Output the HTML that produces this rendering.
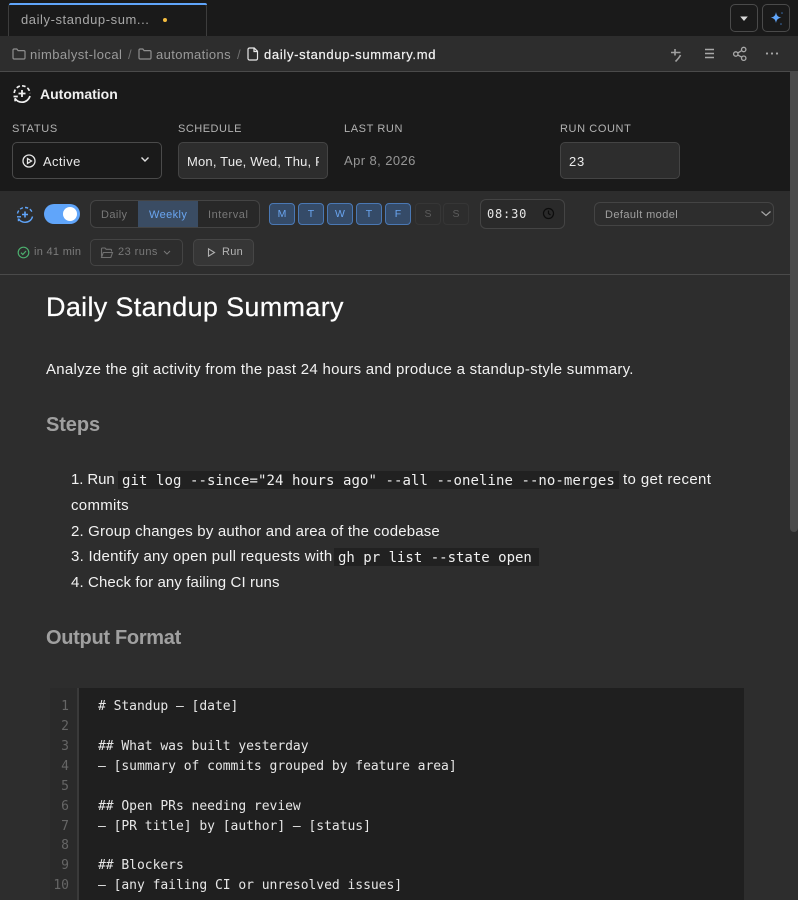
<!DOCTYPE html>
<html><head><meta charset="utf-8">
<style>
html,body{margin:0;padding:0;background:#2d2d2d;}
#p{position:relative;width:798px;height:900px;overflow:hidden;background:#2d2d2d;font-family:"Liberation Sans",sans-serif;color:#fff;}
#p div,#p span.a,#p svg{position:absolute;}
.t{white-space:nowrap;}
.lbl{font-size:11px;color:#b3b3b3;letter-spacing:.7px;top:123px;line-height:13px;}
.box{box-sizing:border-box;border-radius:5px;}
.day{box-sizing:border-box;width:26px;height:22px;top:203px;border-radius:4px;border:1px solid #4a78b4;background:#354b68;color:#6aa5f0;font-size:10.5px;text-align:center;line-height:20px;}
.off{border:1px solid #363636;background:#2d2d2d;color:#5c5c5c;}
.mono{font-family:"DejaVu Sans Mono","Liberation Mono",monospace;}
.code{background:#212121;height:18px;font-size:14px;line-height:20px;color:#f0f0f0;padding:0 4px;box-sizing:border-box;letter-spacing:.07px;}
.b{font-size:15px;line-height:24px;color:#f2f2f2;}
.ln{left:49px;width:20px;text-align:right;font-size:13px;line-height:20px;color:#666;}
.cl{left:98px;font-size:13px;line-height:20px;color:#e6e6e6;letter-spacing:-.03px;}
.tb{font-size:11px;line-height:14px;top:208px;letter-spacing:.4px;}
</style></head><body>
<div id="p">
<!-- tab bar -->
<div style="left:0;top:0;width:798px;height:36px;background:#1a1a1a"></div>
<div style="left:8px;top:3px;width:199px;height:33px;box-sizing:border-box;border:1px solid #3d3d3d;border-bottom:none;border-radius:4px 4px 0 0;background:#1a1a1a"></div>
<div style="left:9px;top:3px;width:198px;height:2px;background:#60a5fa;border-radius:2px 2px 0 0"></div>
<div class="t" style="left:21px;top:12px;font-size:13px;line-height:15px;color:#a8a8a8;letter-spacing:.57px">daily-standup-sum...</div>
<div style="left:163px;top:18px;width:4px;height:4px;border-radius:50%;background:#f5bd3f"></div>
<div class="box" style="left:730px;top:4px;width:28px;height:28px;border:1px solid #4a4a4a;border-radius:5px"></div>
<svg style="left:730px;top:4px" width="28" height="28"><path d="M10.200 12.500h7.600L14 17z" fill="#d8d8d8"/></svg>
<div class="box" style="left:762px;top:4px;width:28px;height:28px;border:1px solid #4a4a4a;border-radius:5px"></div>
<svg style="left:762px;top:4px" width="28" height="28"><path d="M14 8c.6 3.600 1.800 5 5.400 5.600-3.600.6-4.800 2-5.400 5.400-.6-3.400-1.800-4.800-5.400-5.400 3.600-.6 4.800-2 5.400-5.600z" fill="#60a5fa"/><circle cx="20" cy="9" r=".8" fill="#3b6fb0"/><circle cx="19" cy="20" r=".8" fill="#3b6fb0"/></svg>
<!-- breadcrumb -->
<div style="left:0;top:36px;width:798px;height:36px;background:#2d2d2d;border-bottom:1px solid #4a4a4a;box-sizing:border-box"></div>
<svg style="left:12px;top:47px" width="14" height="14" fill="none" stroke="#8f8f8f" stroke-width="1.200"><path d="M1 3.200c0-.7.5-1.200 1.200-1.200h2.600l1.300 1.600h5.700c.7 0 1.200.5 1.200 1.200v6c0 .7-.5 1.200-1.200 1.200H2.200c-.7 0-1.200-.5-1.200-1.200z"/></svg>
<div class="t" style="left:30px;top:47px;font-size:13px;line-height:15px;color:#9a9a9a;letter-spacing:.42px">nimbalyst-local</div>
<div class="t" style="left:128px;top:47px;font-size:13px;line-height:15px;color:#707070">/</div>
<svg style="left:138px;top:47px" width="14" height="14" fill="none" stroke="#8f8f8f" stroke-width="1.200"><path d="M1 3.200c0-.7.5-1.200 1.200-1.200h2.600l1.300 1.600h5.700c.7 0 1.200.5 1.200 1.200v6c0 .7-.5 1.200-1.200 1.200H2.200c-.7 0-1.200-.5-1.200-1.200z"/></svg>
<div class="t" style="left:156px;top:47px;font-size:13px;line-height:15px;color:#9a9a9a;letter-spacing:.38px">automations</div>
<div class="t" style="left:237px;top:47px;font-size:13px;line-height:15px;color:#707070">/</div>
<svg style="left:247px;top:47px" width="12" height="14" fill="none" stroke="#e8e8e8" stroke-width="1.200"><path d="M2.500 1h4.700l3.300 3.300v7.200c0 .8-.6 1.500-1.400 1.500H2.500c-.8 0-1.500-.7-1.500-1.500v-9C1 1.700 1.700 1 2.500 1zM7 1v3.500h3.500"/></svg>
<div class="t" style="left:264px;top:47px;font-size:13px;line-height:15px;color:#f2f2f2;letter-spacing:.68px;-webkit-text-stroke:.2px #f2f2f2">daily-standup-summary.md</div>
<svg style="left:668px;top:46px" width="16" height="18" fill="none" stroke="#a0a0a0" stroke-width="1.600"><path d="M3 6.500h9.500M7 3v6.500M12.500 9c-1 2.500-3 4.500-5 6.500"/></svg>
<svg style="left:703px;top:48px" width="14" height="12" fill="none" stroke="#a8a8a8" stroke-width="1.400"><path d="M2 1.500h9M2 5.500h9M2 9.500h9"/></svg>
<svg style="left:732px;top:46px" width="16" height="16" fill="none" stroke="#a8a8a8" stroke-width="1.300"><circle cx="3.800" cy="8" r="2.200"/><circle cx="11.700" cy="3.500" r="2.200"/><circle cx="11.700" cy="12.200" r="2.200"/><path d="M5.800 6.900l4-2.300M5.800 9.100l4 2.100"/></svg>
<svg style="left:765px;top:50px" width="14" height="8" fill="#a8a8a8"><circle cx="2" cy="3.500" r="1.100"/><circle cx="7" cy="3.500" r="1.100"/><circle cx="12" cy="3.500" r="1.100"/></svg>
<!-- automation panel -->
<div style="left:0;top:72px;width:790px;height:119px;background:#1a1a1a"></div>
<div style="left:790px;top:72px;width:8px;height:460px;background:#4a4a4a;border-radius:0 0 4px 4px"></div>
<svg style="left:12px;top:84px" width="20" height="20" fill="none" stroke="#f0f0f0" stroke-width="1.700"><path d="M10 6v7M6.500 9.500h7" stroke-width="1.800"/><path d="M2.200 9C2.600 5 6 1.800 10 1.800c4.200 0 7.700 3.300 8 7.400" stroke-dasharray="3.600 2.200"/><path d="M18 12c-1 3.500-4.200 6.200-8 6.200-3 0-5.500-1.500-7-3.900"/><path d="M1.500 12.500h4.300M3 14.300l.2 3" /></svg>
<div class="t" style="left:40px;top:86px;font-size:14px;line-height:16px;font-weight:bold;color:#f0f0f0">Automation</div>
<div class="t lbl" style="left:12px;top:123px">STATUS</div>
<div class="t lbl" style="left:178px;top:123px;letter-spacing:.5px">SCHEDULE</div>
<div class="t lbl" style="left:344px;top:123px;letter-spacing:.6px">LAST RUN</div>
<div class="t lbl" style="left:560px;top:123px;letter-spacing:.6px">RUN COUNT</div>
<div class="box" style="left:12px;top:142px;width:150px;height:37px;border:1px solid #4a4a4a;background:#1a1a1a"></div>
<svg style="left:22px;top:154px" width="14" height="14" fill="none" stroke="#e8e8e8" stroke-width="1.300"><circle cx="7" cy="7" r="6"/><path d="M5.500 4.500l4 2.500-4 2.500z"/></svg>
<div class="t" style="left:43px;top:154px;font-size:13px;line-height:15px;color:#e8e8e8;letter-spacing:.38px">Active</div>
<svg style="left:140px;top:156px" width="10" height="8" fill="none" stroke="#e0e0e0" stroke-width="1.400"><path d="M1.500 1.500L5 5l3.500-3.500"/></svg>
<div class="box" style="left:178px;top:142px;width:150px;height:37px;border:1px solid #444;background:#2d2d2d"></div>
<div class="t" style="left:187px;top:154px;width:132px;overflow:hidden;font-size:13px;line-height:15px;color:#ececec;letter-spacing:.18px">Mon, Tue, Wed, Thu, Fri</div>
<div class="t" style="left:344px;top:153px;font-size:13px;line-height:15px;color:#969696;letter-spacing:.42px">Apr 8, 2026</div>
<div class="box" style="left:560px;top:142px;width:120px;height:37px;border:1px solid #444;background:#2d2d2d"></div>
<div class="t" style="left:569px;top:154px;font-size:13px;line-height:15px;color:#ececec;letter-spacing:.8px">23</div>
<!-- config toolbar -->
<svg style="left:15px;top:205px" width="20" height="20" fill="none" stroke="#60a5fa" stroke-width="1.400"><path d="M10 6.500v6M7 9.500h6" stroke-width="1.600"/><path d="M2.500 8.500C3.100 5 6.200 2.500 10 2.500c3.600 0 6.800 2.600 7.400 6" stroke-dasharray="3.200 2"/><path d="M17.500 11.500c-.7 3.400-3.700 5.800-7.500 5.800-2.700 0-5-1.300-6.300-3.400"/><path d="M2 11.800h4M3.400 13.500l.1 2.700"/></svg>
<div style="left:44px;top:204px;width:36px;height:20px;border-radius:10px;background:#60a5fa"></div>
<div style="left:63px;top:207px;width:14px;height:14px;border-radius:50%;background:#fff"></div>
<div class="box" style="left:90px;top:200px;width:170px;height:28px;border:1px solid #444;background:#282828;border-radius:6px"></div>
<div style="left:138px;top:201px;width:60px;height:26px;background:#3a4c63"></div>
<div class="t tb" style="left:101px;color:#787878">Daily</div>
<div class="t tb" style="left:149px;color:#6aa5f0">Weekly</div>
<div class="t tb" style="left:208px;color:#787878;letter-spacing:.55px">Interval</div>
<div class="day" style="left:269px">M</div>
<div class="day" style="left:298px">T</div>
<div class="day" style="left:327px">W</div>
<div class="day" style="left:356px">T</div>
<div class="day" style="left:385px">F</div>
<div class="day off" style="left:415px">S</div>
<div class="day off" style="left:443px">S</div>
<div class="box" style="left:480px;top:199px;width:85px;height:30px;border:1px solid #444;border-radius:6px;background:#2a2a2a"></div>
<div class="t mono" style="left:487px;top:207px;font-size:12px;line-height:15px;color:#e6e6e6;letter-spacing:.8px">08:30</div>
<svg style="left:542px;top:207px" width="13" height="13" fill="none" stroke="#0c0c0c" stroke-width="1.200"><circle cx="6.500" cy="6.500" r="5"/><path d="M6.500 3.500v3l2 1.500"/></svg>
<div class="box" style="left:594px;top:202px;width:180px;height:24px;border:1px solid #444;background:#2d2d2d;border-radius:6px"></div>
<div class="t tb" style="left:605px;color:#a0a0a0;letter-spacing:.4px">Default model</div>
<svg style="left:760px;top:210px" width="12" height="8" fill="none" stroke="#a8a8a8" stroke-width="1.200"><path d="M1.500 1.500L6 5.500l4.500-4"/></svg>
<svg style="left:17px;top:246px" width="13" height="13" fill="none" stroke="#4caf6e" stroke-width="1.200"><circle cx="6.500" cy="6.500" r="5.300"/><path d="M4 6.700l1.800 1.800L9 5"/></svg>
<div class="t" style="left:34px;top:246px;font-size:11px;line-height:13px;color:#7c7c7c;letter-spacing:.3px">in 41 min</div>
<div class="box" style="left:90px;top:239px;width:93px;height:27px;border:1px solid #444;border-radius:5px"></div>
<svg style="left:100px;top:246px" width="14" height="14" fill="none" stroke="#707070" stroke-width="1.100"><path d="M1.500 10.500V3c0-.5.4-1 1-1h2.500l1.200 1.300h4.300c.5 0 1 .4 1 1v1.200M1.500 11.500l1.800-5h9.200l-1.700 5z"/></svg>
<div class="t" style="left:118px;top:246px;font-size:11px;line-height:13px;color:#787878;letter-spacing:.45px">23 runs</div>
<svg style="left:163px;top:250px" width="8" height="6" fill="none" stroke="#787878" stroke-width="1"><path d="M1 1l3 3 3-3"/></svg>
<div class="box" style="left:193px;top:239px;width:61px;height:27px;border:1px solid #464646;background:#363636;border-radius:5px"></div>
<svg style="left:206px;top:247px" width="11" height="11" fill="none" stroke="#b0b0b0" stroke-width="1.100"><path d="M2.500 1.800l6 3.700-6 3.700z"/></svg>
<div class="t" style="left:222px;top:246px;font-size:11px;line-height:13px;color:#b4b4b4;letter-spacing:.3px">Run</div>
<div style="left:0;top:274px;width:790px;height:1px;background:#4a4a4a"></div>
<!-- content -->
<div class="t" style="left:46px;top:291px;font-size:27px;line-height:32px;color:#fff;letter-spacing:.32px;-webkit-text-stroke:.2px #fff">Daily Standup Summary</div>
<div class="t b" style="left:46px;top:358px;letter-spacing:.27px">Analyze the git activity from the past 24 hours and produce a standup-style summary.</div>
<div class="t" style="left:46px;top:413px;font-size:20px;line-height:24px;font-weight:bold;color:#a0a0a0;letter-spacing:-.1px">Steps</div>
<div class="t b" style="left:71px;top:468px;letter-spacing:-.1px">1. Run</div>
<div class="code mono t" style="left:118px;top:471px;width:501px">git log --since="24 hours ago" --all --oneline --no-merges</div>
<div class="t b" style="left:623px;top:468px;letter-spacing:.38px">to get recent</div>
<div class="t b" style="left:71px;top:494px;letter-spacing:.3px">commits</div>
<div class="t b" style="left:71px;top:520px;letter-spacing:.17px">2. Group changes by author and area of the codebase</div>
<div class="t b" style="left:71px;top:545px;letter-spacing:.27px">3. Identify any open pull requests with</div>
<div class="code mono t" style="left:334px;top:548px;width:205px;letter-spacing:0">gh pr list --state open</div>
<div class="t b" style="left:71px;top:571px;letter-spacing:.11px">4. Check for any failing CI runs</div>
<div class="t" style="left:46px;top:626px;font-size:20px;line-height:24px;font-weight:bold;color:#a0a0a0;letter-spacing:-.3px">Output Format</div>
<!-- code block -->
<div style="left:50px;top:688px;width:694px;height:212px;background:#1f1f1f"></div>
<div style="left:50px;top:688px;width:28px;height:212px;background:#2a2a2a"></div>
<div style="left:77px;top:688px;width:2px;height:212px;background:#3a3a3a"></div>
<div class="mono ln" style="top:697px">1</div><div class="mono t cl" style="top:697px"># Standup – [date]</div>
<div class="mono ln" style="top:717px">2</div>
<div class="mono ln" style="top:737px">3</div><div class="mono t cl" style="top:737px">## What was built yesterday</div>
<div class="mono ln" style="top:757px">4</div><div class="mono t cl" style="top:757px">– [summary of commits grouped by feature area]</div>
<div class="mono ln" style="top:777px">5</div>
<div class="mono ln" style="top:797px">6</div><div class="mono t cl" style="top:797px">## Open PRs needing review</div>
<div class="mono ln" style="top:817px">7</div><div class="mono t cl" style="top:817px">– [PR title] by [author] – [status]</div>
<div class="mono ln" style="top:836px">8</div>
<div class="mono ln" style="top:856px">9</div><div class="mono t cl" style="top:856px">## Blockers</div>
<div class="mono ln" style="top:876px">10</div><div class="mono t cl" style="top:876px">– [any failing CI or unresolved issues]</div>
</div>
</body></html>
